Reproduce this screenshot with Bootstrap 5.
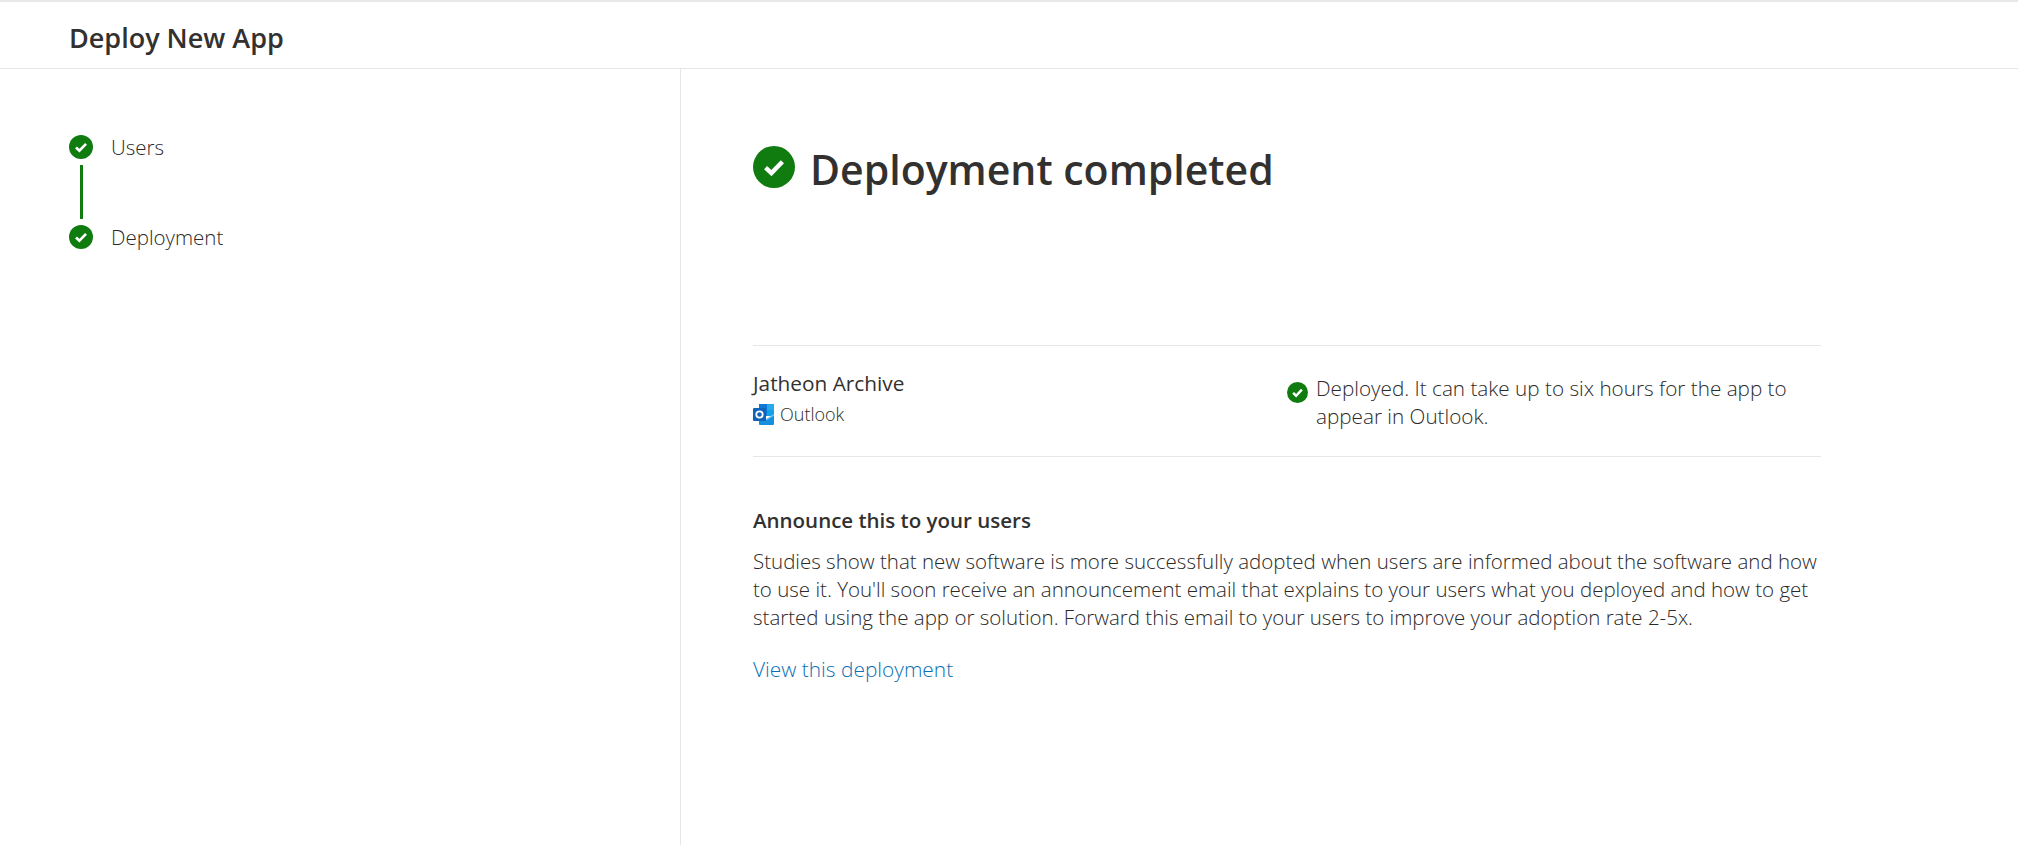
<!DOCTYPE html>
<html lang="en">
<head>
  <meta charset="UTF-8">
  <meta name="viewport" content="width=device-width, initial-scale=1.0">
  <title>Deploy New App</title>
  <link href="https://cdn.jsdelivr.net/npm/bootstrap@5.3.0/dist/css/bootstrap.min.css" rel="stylesheet">
  <style>
    html, body { height: 100%; }
    body {
      font-family: "Open Sans", "Liberation Sans", sans-serif;
      color: #2b2a29;
      font-size: 20.5px;
      background: #fff;
      overflow: hidden;
    }
    .page-wrap { height: 845px; border-top: 2px solid #e8e8e8; }
    .top-bar { height: 67px; padding: 6px 0 0 69px; border-bottom: 1px solid #e6e6e6; }
    .top-bar h1 { font-size: 27px; font-weight: 600; margin: 0; color: #323130; }
    .side-pane { width: 681px; border-right: 1px solid #e6e6e6; padding: 66px 0 0 69px; flex-shrink: 0; }
    .step-row { height: 24px; gap: 18px; font-weight: 300; }
    .step-line { width: 3px; height: 54px; margin: 6px 0 6px 11px; background: #107c10; }
    .main-pane { padding: 0 0 0 72px; width: 1140px; }
    .done-title { height: 276px; padding-top: 73px; gap: 15px; align-items: flex-start; }
    .done-title h2 { font-size: 41px; font-weight: 600; line-height: 54px; margin: 0; color: #323130; }
    .app-row { height: 112px; border-top: 1px solid #e6e6e6; border-bottom: 1px solid #e6e6e6; }
    .app-name { width: 534px; padding-top: 23px; }
    .app-title { font-size: 20.8px; line-height: 28px; color: #323130; }
    .app-host { font-size: 18px; line-height: 24px; font-weight: 300; gap: 6px; margin-top: 5px; }
    .app-status { width: 530px; padding-top: 28px; line-height: 28px; gap: 8px; font-weight: 300; font-size: 20.7px; }
    .app-status svg { margin-top: 8px; flex-shrink: 0; }
    .announce { padding-top: 48px; }
    .announce h3 { font-size: 20.5px; font-weight: 600; line-height: 30px; margin: 0 0 13px; color: #323130; }
    .announce p { line-height: 27.8px; font-weight: 300; margin: 0 0 23px; }
    .announce a { color: #0b6fb5; text-decoration: none; font-weight: 300; font-size: 20.9px; }
  </style>
</head>
<body>
  <div class="page-wrap d-flex flex-column">
    <header class="top-bar d-flex align-items-center">
      <h1>Deploy New App</h1>
    </header>

    <div class="d-flex flex-grow-1">
      <aside class="side-pane">
        <div class="step-row d-flex align-items-center">
          <svg width="24" height="24" viewBox="0 0 24 24"><circle cx="12" cy="12" r="12" fill="#107c10"/><path d="M7 12.5l3.4 3.2L17 8.8" fill="none" stroke="#fff" stroke-width="2.6"/></svg>
          <span>Users</span>
        </div>
        <div class="step-line"></div>
        <div class="step-row d-flex align-items-center">
          <svg width="24" height="24" viewBox="0 0 24 24"><circle cx="12" cy="12" r="12" fill="#107c10"/><path d="M7 12.5l3.4 3.2L17 8.8" fill="none" stroke="#fff" stroke-width="2.6"/></svg>
          <span>Deployment</span>
        </div>
      </aside>

      <main class="main-pane">
        <div class="done-title d-flex">
          <svg width="42" height="42" viewBox="0 0 24 24" class="flex-shrink-0 mt-1"><circle cx="12" cy="12" r="12" fill="#107c10"/><path d="M7.2 12.4l3.3 3.1L16.8 9" fill="none" stroke="#fff" stroke-width="2.5"/></svg>
          <h2>Deployment completed</h2>
        </div>

        <div class="app-row d-flex">
          <div class="app-name">
            <div class="app-title">Jatheon Archive</div>
            <div class="app-host d-flex align-items-center">
              <svg width="21" height="21" viewBox="0 0 21 21">
                <path d="M6 0h14a1 1 0 0 1 1 1v11H6z" fill="#0f78d4"/>
                <path d="M14 0h6a1 1 0 0 1 1 1v5h-7z" fill="#28a8ea"/>
                <path d="M14 6h7v6h-7z" fill="#14a0e8"/>
                <path d="M6 11l7.5 4.5L21 11v9a1 1 0 0 1-1 1H7a1 1 0 0 1-1-1z" fill="#1490df"/>
                <path d="M13 15l8-5v1.6l-8 5z" fill="#7cc4f0"/>
                <rect y="4" width="13" height="13" rx="1.2" fill="#0f63b8"/>
                <circle cx="6.5" cy="10.5" r="3.2" fill="none" stroke="#fff" stroke-width="1.8"/>
              </svg>
              <span>Outlook</span>
            </div>
          </div>
          <div class="app-status d-flex">
            <svg width="21" height="21" viewBox="0 0 24 24"><circle cx="12" cy="12" r="12" fill="#107c10"/><path d="M7 12.5l3.4 3.2L17 8.8" fill="none" stroke="#fff" stroke-width="2.8"/></svg>
            <div>Deployed. It can take up to six hours for the app to appear in Outlook.</div>
          </div>
        </div>

        <div class="announce">
          <h3>Announce this to your users</h3>
          <p>Studies show that new software is more successfully adopted when users are informed about the software and how to use it. You'll soon receive an announcement email that explains to your users what you deployed and how to get started using the app or solution. Forward this email to your users to improve your adoption rate 2-5x.</p>
          <a href="#">View this deployment</a>
        </div>
      </main>
    </div>
  </div>
  <script src="https://cdn.jsdelivr.net/npm/bootstrap@5.3.0/dist/js/bootstrap.bundle.min.js"></script>
</body>
</html>
